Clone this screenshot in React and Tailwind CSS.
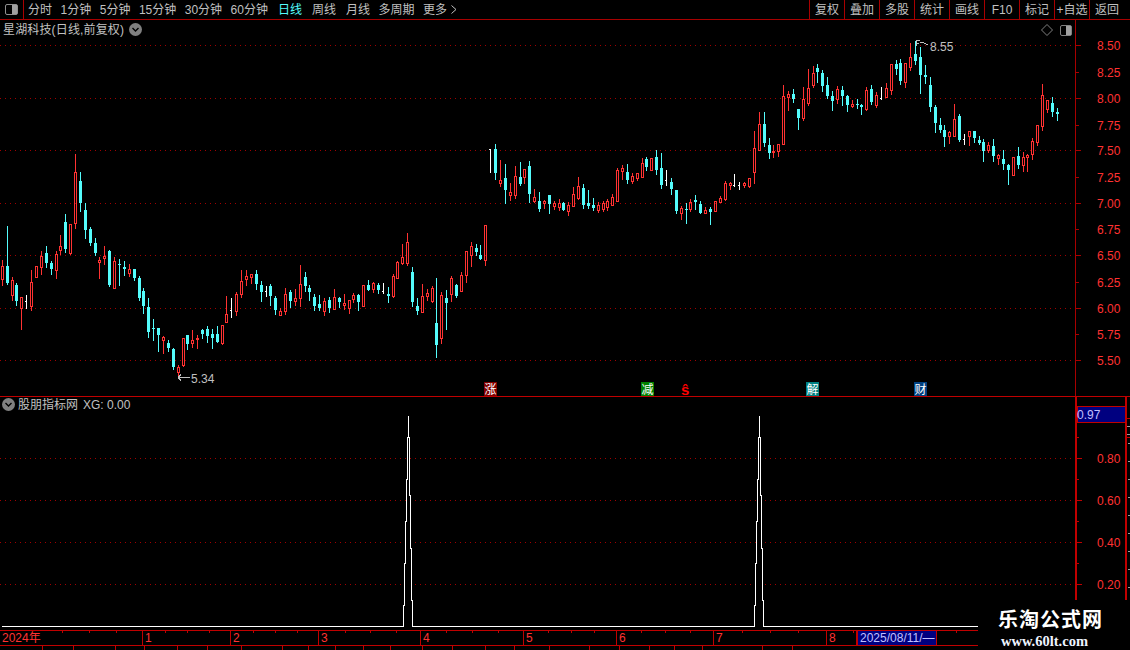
const RAW = `r260,266,279,285 c226,266,283,284 r277,280,295,300 c283,285,301,305 r297,297,308,329 w295,301,301,308 r270,282,306,310 r266,266,277,277 r251,256,267,274 c246,253,263,267 c261,263,269,274 r251,254,270,278 r235,246,250,254 c214,222,249,252 r224,224,253,254 r154,172,223,228 c172,181,203,211 c203,210,230,238 c227,229,243,245 c238,243,253,255 r257,260,262,278 r246,256,258,264 c250,251,285,286 r257,261,288,288 c259,264,265,285 c261,267,269,275 r264,269,273,276 c269,269,278,280 c276,278,298,300 c288,291,306,313 c298,307,332,337 c319,328,329,340 c328,328,335,351 r336,337,340,353 c340,343,348,351 c348,349,367,369 r365,367,372,378 r338,338,365,366 c335,335,344,349 r330,340,343,347 r335,338,339,348 c329,330,334,338 c326,329,336,342 c329,334,338,348 c326,334,342,342 r325,325,343,344 r296,314,322,322 w298,310,310,317 r292,294,311,315 r270,281,294,297 r270,276,279,285 r274,274,277,283 c270,274,284,289 c281,285,292,301 w286,291,291,296 c284,286,296,305 c296,298,310,314 r308,311,315,315 r288,294,311,314 c290,292,301,307 r289,298,301,305 r265,284,298,306 c272,277,286,291 c285,288,292,300 c294,297,306,310 c295,304,308,310 r298,301,311,315 c297,300,308,312 r289,297,309,309 c297,298,302,307 r294,303,305,309 r300,300,308,313 r293,295,299,302 c294,295,302,310 r285,285,306,306 c280,285,290,290 r282,283,289,292 c283,285,290,293 w283,291,291,293 c287,294,296,302 r274,276,296,297 r261,262,278,278 r244,257,263,264 r233,242,263,265 c267,272,302,306 c298,306,311,314 r284,296,312,312 r289,293,296,300 r286,288,301,302 c278,323,345,357 r292,295,338,343 c290,298,303,329 r276,278,294,301 c284,285,296,297 r272,275,291,291 r251,251,275,282 r242,246,255,266 c244,248,252,255 c245,255,259,259 r225,225,260,265 w149,149,149,172 c144,149,173,179 r160,180,183,186 c164,178,190,203 r183,192,195,200 r166,176,195,198 c162,177,184,185 r169,169,177,183 c161,166,194,202 r189,197,201,202 c192,201,209,211 r200,201,203,208 c195,195,204,213 r201,203,206,209 r199,203,207,210 c202,203,210,210 r202,205,211,215 r187,194,206,206 r177,186,198,199 c184,188,205,208 c190,203,206,208 c198,205,208,210 r202,205,210,212 r201,203,209,211 r199,201,207,210 r194,197,205,205 r168,170,201,201 r165,168,171,179 c164,172,180,183 r173,176,181,183 r173,173,178,180 r158,163,177,177 c157,159,167,170 r158,158,170,170 c150,157,170,174 c153,168,185,188 w170,180,180,185 c178,182,189,194 c190,190,211,213 r206,208,213,219 c203,209,210,223 r199,202,209,211 c195,200,202,209 c201,204,213,213 r207,210,213,213 c207,209,212,224 r201,201,211,211 r196,198,202,202 r181,183,199,200 r182,183,185,189 w174,185,185,186 w182,185,185,189 r182,183,185,187 r178,178,186,187 r131,148,172,183 r112,124,150,150 c112,124,143,146 c138,145,153,158 r145,151,152,157 r144,144,151,156 r85,96,144,144 r91,94,97,110 c89,94,99,102 c109,109,118,129 r87,99,118,120 r69,88,103,105 r66,73,85,87 c64,68,72,82 c70,73,86,91 c77,85,96,98 c91,96,101,110 r86,89,99,103 c86,90,96,105 c95,96,105,111 r100,104,106,107 c99,104,105,108 c104,105,107,114 r87,90,109,110 c85,89,102,104 r92,95,105,107 w87,98,98,99 r83,88,97,97 r64,64,90,94 c60,64,69,74 c59,63,81,84 r63,63,82,87 r43,57,67,70 c41,54,61,64 c47,57,75,93 c65,75,77,83 c77,85,107,111 c105,107,123,132 c118,125,130,132 c125,130,137,146 r131,132,136,143 r104,119,136,136 c114,116,140,141 w134,139,139,144 r131,131,136,145 c131,131,138,142 c136,140,143,144 c139,142,151,161 r142,145,150,152 c139,146,156,161 r154,155,158,164 c150,159,164,169 c164,165,170,184 r157,157,175,175 c147,156,165,168 r152,157,165,171 r154,155,157,171 r138,141,154,159 r125,125,142,145 r84,95,126,130 r100,100,109,112 c97,103,112,116 c108,112,114,120`;

const RED = "#ff3232";
const CYAN = "#54fcfc";
const LINE = "#a80000";
const GRAY = "#c0c0c0";

const candles = RAW.split(" ").map((s) => {
  const [h, t, b, l] = s.slice(1).split(",").map(Number);
  return { k: s[0], h, t, b, l };
});

function Candle({ c, i }) {
  const x = Math.floor(2.3 + i * 4.884);
  const o = -20;
  const h = c.h + o, t = c.t + o, b = c.b + o, l = c.l + o;
  if (c.k === "w") {
    return (
      <g fill="#ffffff">
        <rect x={x} y={h} width="1" height={l - h + 1} />
        <rect x={x - 1} y={t} width="1" height="1" />
      </g>
    );
  }
  if (c.k === "c") {
    return (
      <g fill={CYAN}>
        <rect x={x} y={h} width="1" height={l - h + 1} />
        <rect x={x - 1} y={t} width="3" height={Math.max(b - t, 1)} />
      </g>
    );
  }
  return (
    <g fill={RED}>
      {t > h && <rect x={x} y={h} width="1" height={t - h} />}
      {l > b && <rect x={x} y={b} width="1" height={l - b + 1} />}
      <rect x={x - 1} y={t} width="3" height="1" />
      <rect x={x - 1} y={b} width="3" height="1" />
      <rect x={x - 1} y={t} width="1" height={b - t + 1} />
      <rect x={x + 1} y={t} width="1" height={b - t + 1} />
    </g>
  );
}

const priceLabels = [
  ["8.50", 45, 1], ["8.25", 72, 0], ["8.00", 98, 1], ["7.75", 125, 0], ["7.50", 150, 1], ["7.25", 177, 0],
  ["7.00", 203, 1], ["6.75", 229, 0], ["6.50", 255, 1], ["6.25", 282, 0], ["6.00", 308, 1], ["5.75", 334, 0], ["5.50", 360, 1],
];

const marks = [
  ["涨", 484, "#800000"],
  ["减", 641, "#008000"],
  ["解", 806, "#008080"],
  ["财", 914, "#004080"],
];

function Chevron({ className }) {
  return (
    <svg width="13" height="13" viewBox="0 0 13 13" className={className}>
      <circle cx="6.5" cy="6.5" r="6.5" fill="#808080" />
      <path d="M3.5 5 L6.5 8 L9.5 5" fill="none" stroke="#000" strokeWidth="1.4" />
    </svg>
  );
}

function PricePane() {
  return (
    <svg width="1130" height="376" className="block" shapeRendering="crispEdges" fontFamily="'Liberation Sans','Noto Sans CJK SC',sans-serif">
      {priceLabels.filter((p) => p[2]).map((p) => (
        <line key={p[0]} x1="0" x2="1075" y1={p[1] - 20 + 0.5} y2={p[1] - 20 + 0.5} stroke="#a00000" strokeDasharray="1 4" />
      ))}
      {candles.map((c, i) => <Candle key={i} c={c} i={i} />)}
      <rect x="1075" y="0" width="1" height="376" fill={LINE} />
      {priceLabels.map((p) => (
        <g key={p[0]}>
          <rect x="1076" y={p[1] - 20} width={p[2] ? 5 : 3} height="1" fill={LINE} />
          <text x="1097" y={p[1] - 20 + 5} fontSize="12" fill={RED}>{p[0]}</text>
        </g>
      ))}
      <g stroke={GRAY} fill="none">
        <path d="M178 357.5 H190 M178 357.5 L181 354.5 M178 357.5 L181 360.5" />
        <path d="M916.5 26 V20.5 H920 M916.5 23.5 H919 M920 22 L924 23 L928 25" />
      </g>
      <text x="191" y="362.5" fontSize="12" fill={GRAY}>5.34</text>
      <text x="930" y="30.5" fontSize="12" fill={GRAY}>8.55</text>
      {marks.map((m) => (
        <g key={m[0]}>
          <rect x={m[1]} y="362" width="13" height="14" fill={m[2]} />
          <text x={m[1] + 0.5} y="373.5" fontSize="12" fill="#ffffff" fontFamily="'Noto Sans CJK SC',sans-serif">{m[0]}</text>
        </g>
      ))}
      <text x="681" y="374.5" fontSize="15" fontWeight="700" fill="#ff0000" fontFamily="'Liberation Sans',sans-serif">ŝ</text>
      <path d="M1047 4.5 L1052.5 10 L1047 15.5 L1041.5 10 Z" fill="none" stroke="#808080" shapeRendering="auto" />
      <rect x="1060.5" y="5.5" width="11" height="10" rx="1.5" fill="#000" stroke="#808080" shapeRendering="auto" />
      <rect x="1066" y="6" width="5" height="9" fill="#a0a0a0" />
    </svg>
  );
}

const SPIKE =
  "M2 626.5 H403.5 V605 H404.5 V563 H405.5 V521 H406.5 V479 H407.5 V437 H408.5 V416 V437 H409.5 V495 H410.5 V548 H411.5 V600 H412.5 V626.5 H754.5 V605 H755.5 V563 H756.5 V521 H757.5 V479 H758.5 V437 H759.5 V416 V437 H760.5 V495 H761.5 V548 H762.5 V600 H763.5 V626.5 H978";

function IndicatorPane() {
  const o = 397;
  return (
    <svg width="1130" height="233" className="block" shapeRendering="crispEdges" fontFamily="'Liberation Sans','Noto Sans CJK SC',sans-serif">
      {[458, 500, 542, 584].map((y) => (
        <line key={y} x1="0" x2="1075" y1={y - o + 0.5} y2={y - o + 0.5} stroke="#a00000" strokeDasharray="1 4" />
      ))}
      <path d={SPIKE} transform={`translate(0 ${-o})`} fill="#000" stroke="#fff" />
      <rect x="1075" y="0" width="2" height="233" fill="#c00000" />
      <rect x="1125" y="0" width="2" height="233" fill="#c00000" />
      <rect x="1077" y="9" width="48" height="16" fill="#000080" stroke="#c00000" />
      <text x="1077" y="22" fontSize="12" fill="#c0c0ff">0.97</text>
      {[["0.80", 458], ["0.60", 500], ["0.40", 542], ["0.20", 584]].map((p) => (
        <g key={p[0]}>
          <rect x="1077" y={p[1] - o} width="5" height="1" fill="#c00000" />
          <rect x="1077" y={p[1] - o - 21} width="2" height="1" fill="#c00000" />
          <text x="1097" y={p[1] - o + 5} fontSize="12" fill={RED}>{p[0]}</text>
        </g>
      ))}
      {[418, 437].map((y) => <rect key={y} x="1127" y={y - o} width="3" height="1" fill="#c00000" />)}
      {[426, 434].map((y) => <rect key={y} x="1127" y={y - o} width="3" height="1" fill="#a0a0a0" />)}
      {[443, 461, 479, 497, 515, 533, 551, 569, 587].map((y) => (
        <rect key={y} x="1128" y={y - o} width="2" height="1" fill="#a0a0a0" />
      ))}
    </svg>
  );
}

const navLeft = [
  ["分时", ""], ["1分钟", ""], ["5分钟", ""], ["15分钟", ""], ["30分钟", ""], ["60分钟", ""],
  ["日线", "mx-[1.5px] text-[#54fcfc]"], ["周线", "mr-[1.5px]"], ["月线", ""], ["多周期", ""],
];
const navRight = ["复权", "叠加", "多股", "统计", "画线", "F10", "标记", "+自选", "返回"];

const months = [
  ["2024年", 143], ["1", 88], ["2", 88], ["3", 102], ["4", 103], ["5", 93], ["6", 97], ["7", 113], ["8", 30],
];
const axisTicks = [62, 89, 116, 165, 187, 209, 253, 275, 297, 345, 370, 396, 446, 472, 498, 548, 571, 594, 641, 665, 690, 742, 770, 798, 853, 956];
const bottomCells = [43, 31, 42, 29, 33, 30, 34, 41, 26, 27, 28, 27, 32, 30, 33, 29, 35, 40, 30, 30, 25, 28, 60, 30];

export default function App() {
  return (
    <div className="relative w-[1130px] h-[650px] overflow-hidden bg-black text-[12px] leading-none text-[#c0c0c0] font-['Liberation_Sans','Noto_Sans_CJK_SC',sans-serif]">
      {/* toolbar */}
      <div className="flex h-[20px] items-stretch border-b border-[#a80000]">
        <div className="flex w-[24px] items-center justify-center border-r border-[#a80000]">
          <svg width="13" height="11" viewBox="0 0 13 11">
            <rect x="0.5" y="0.5" width="12" height="10" rx="1.5" fill="#000" stroke="#909090" />
            <rect x="7" y="1" width="5" height="9" fill="#a0a0a0" />
          </svg>
        </div>
        <div className="flex items-center gap-[8.5px] pl-[4px]">
          {navLeft.map((n) => (
            <span key={n[0]} className={n[1]}>{n[0]}</span>
          ))}
          <span className="flex items-center gap-[4px]">
            更多
            <svg width="6" height="9" viewBox="0 0 6 9">
              <path d="M0.5 0.5 L5 4.5 L0.5 8.5" fill="none" stroke="#c0c0c0" />
            </svg>
          </span>
        </div>
        <div className="flex-1" />
        <div className="flex items-stretch pr-[6px]">
          {navRight.map((n) => (
            <div key={n} className="flex w-[35px] items-center justify-center border-l border-[#a80000]">{n}</div>
          ))}
        </div>
      </div>

      {/* price pane */}
      <div className="relative h-[376px]">
        <div className="absolute left-[3px] top-[3px] flex items-center gap-[5px]">
          <span className="tracking-[0.15px]">星湖科技(日线,前复权)</span>
          <Chevron />
        </div>
        <PricePane />
      </div>

      {/* indicator pane */}
      <div className="relative h-[234px] border-t border-[#c00000]">
        <div className="absolute left-[2px] top-[1px] flex items-center gap-[3px]">
          <Chevron />
          <span>股朋指标网</span>
          <span className="ml-[2px]">XG: 0.00</span>
        </div>
        <IndicatorPane />
      </div>

      {/* date axis */}
      <div className="relative flex h-[16px] w-full items-stretch border-y border-[#c00000] text-[#ff3232]">
        {months.map((m) => (
          <div key={m[0]} style={{ width: m[1] }} className="flex items-center border-r border-[#c00000] pl-[2px] last:border-r-0">{m[0]}</div>
        ))}
        <div className="flex w-[80px] items-center border-x border-[#c00000] bg-[#000080] pl-[2px] text-[#c0c0ff]">2025/08/11/—</div>
        <svg width="1130" height="3" className="absolute left-0 top-0" shapeRendering="crispEdges">
          {axisTicks.map((x) => <rect key={x} x={x} y="0" width="1" height="2" fill="#c00000" />)}
        </svg>
      </div>

      {/* cut-off tab row */}
      <div className="flex h-[4px] overflow-hidden">
        {bottomCells.map((w, i) => (
          <div key={i} style={{ width: w }} className="h-[4px] shrink-0 border-r border-[#c00000]" />
        ))}
      </div>

      {/* watermark */}
      <div className="absolute right-0 bottom-0 flex h-[50px] w-[152px] flex-col items-start bg-black pt-[9px] pl-[20px]">
        <span className="text-[20px] font-bold text-white tracking-[1px] font-['Noto_Sans_CJK_SC',sans-serif]">乐淘公式网</span>
        <span className="mt-[5px] ml-[3px] text-[14.5px] font-bold text-[#eef4ff] font-['Liberation_Serif',serif]">www.60lt.com</span>
      </div>
    </div>
  );
}
